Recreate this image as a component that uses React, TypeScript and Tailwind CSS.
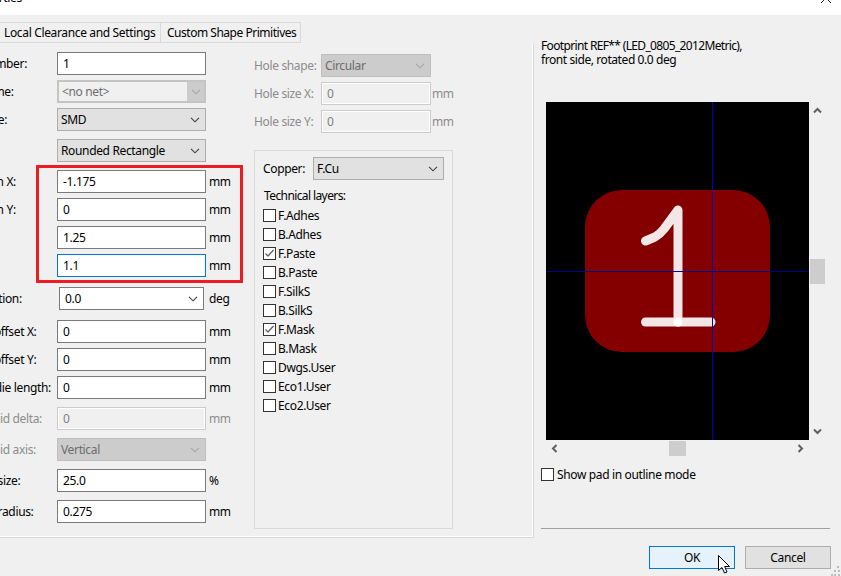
import React from "react";

const Chevron = ({ color = "#404040" }: { color?: string }) => (
  <svg width="10" height="6" viewBox="0 0 10 6" className="shrink-0">
    <polyline points="1,0.8 5,4.8 9,0.8" fill="none" stroke={color} strokeWidth="1.1" />
  </svg>
);

const Field = ({ value, active }: { value: string; active?: boolean }) => (
  <div
    className={`flex h-[23px] w-[149px] shrink-0 items-center border bg-white pl-[5px] ${
      active ? "border-[#0078d7]" : "border-[#7a7a7a]"
    }`}
  >
    {value}
  </div>
);

const DisabledField = ({ value, w }: { value: string; w: string }) => (
  <div className={`flex h-[23px] shrink-0 items-center border border-[#cccccc] bg-[#f0f0f0] pl-[5px] text-[#808080] shadow-[inset_0_0_0_1px_#ffffff] ${w}`}>
    {value}
  </div>
);

const Select = ({ value, w = "w-[149px]" }: { value: string; w?: string }) => (
  <div className={`flex h-[23px] shrink-0 items-center justify-between border border-[#adadad] bg-[#e1e1e1] pl-[3px] pr-[5px] ${w}`}>
    <span>{value}</span>
    <Chevron />
  </div>
);

const DisabledSelect = ({ value, w = "w-[149px]" }: { value: string; w?: string }) => (
  <div className={`flex h-[23px] shrink-0 items-center justify-between border border-[#bfbfbf] bg-[#cccccc] pl-[3px] pr-[5px] text-[#6d6d6d] ${w}`}>
    <span>{value}</span>
    <Chevron color="#a6a6a6" />
  </div>
);

const Row = ({
  label,
  unit,
  disabled,
  top,
  labelClass = "",
  children,
}: {
  label: string;
  unit?: string;
  disabled?: boolean;
  top: string;
  labelClass?: string;
  children: React.ReactNode;
}) => (
  <div className={`flex h-[23px] items-center ${top}`}>
    <span className={`w-[99px] shrink-0 whitespace-nowrap ${labelClass} ${disabled ? "text-[#8c8c8c]" : ""}`}>{label}</span>
    {children}
    {unit && <span className={`ml-[3px] ${disabled ? "text-[#8c8c8c]" : ""}`}>{unit}</span>}
  </div>
);

const Check = ({
  label,
  checked,
  top = "mt-[6px]",
  gap = "ml-[2px]",
}: {
  label: string;
  checked?: boolean;
  top?: string;
  gap?: string;
}) => (
  <div className={`flex h-[13px] items-center ${top}`}>
    <div className="flex h-[13px] w-[13px] shrink-0 items-center justify-center border border-[#333333] bg-white">
      {checked && (
        <svg width="11" height="11" viewBox="0 0 11 11">
          <polyline points="1.5,5.5 4,8 9.5,2" fill="none" stroke="#606060" strokeWidth="1.3" />
        </svg>
      )}
    </div>
    <span className={`whitespace-nowrap ${gap}`}>{label}</span>
  </div>
);

const Arrow = ({ d }: { d: string }) => (
  <svg width="9" height="9" viewBox="0 0 9 9" className="shrink-0">
    <polyline points={d} fill="none" stroke="#606060" strokeWidth="2" />
  </svg>
);

export default function App() {
  return (
    <div className="relative flex h-[576px] w-[841px] flex-col overflow-hidden bg-[#f0f0f0] font-['Noto_Sans',sans-serif] text-[12px] leading-[14px] tracking-[-0.35px] text-black">
      {/* title bar */}
      <div className="flex h-[15px] shrink-0 items-start justify-between overflow-hidden bg-white">
        <span className="-ml-[56px] -mt-[9px] whitespace-nowrap text-[12px] leading-[14px]">Pad Properties</span>
        <svg width="12" height="12" viewBox="0 0 12 12" className="mr-[9px] -mt-[7px]">
          <path d="M1 0 L11 10 M11 0 L1 10" stroke="#222222" strokeWidth="1" fill="none" />
        </svg>
      </div>

      <div className="flex flex-1">
        {/* notebook */}
        <div className="-ml-[42px] flex w-[576px] shrink-0 flex-col pt-[7px]">
          <div className="ml-[42px] flex h-[21px] items-center whitespace-nowrap">
            <div className="flex h-[21px] w-[161px] items-center border-y border-r border-[#d9d9d9] pl-[4px]">Local Clearance and Settings</div>
            <div className="flex h-[21px] w-[140px] items-center border-y border-r border-[#d9d9d9] pl-[6px] tracking-[-0.48px]">Custom Shape Primitives</div>
          </div>
          <div className="flex h-[495px] border-b border-r border-[#d9d9d9] shadow-[inset_-1px_-1px_0_#ffffff]">
            {/* left column */}
            <div className="flex w-[296px] shrink-0 flex-col pt-[9px]">
              <Row label="Pad number:" top=""><Field value="1" /></Row>
              <Row label="Net name:" top="mt-[5px]">
                <div className="flex h-[23px] w-[149px] shrink-0 items-center justify-between border-2 border-[#c4c4c4] bg-[#f0f0f0] pl-[3px] text-[#6d6d6d]">
                  <span>&lt;no net&gt;</span>
                  <div className="flex h-full w-[17px] items-center justify-center bg-[#cccccc]"><Chevron color="#a6a6a6" /></div>
                </div>
              </Row>
              <Row label="Pad type:" top="mt-[5px]"><Select value="SMD" /></Row>
              <Row label="Shape:" top="mt-[8px]"><Select value="Rounded Rectangle" /></Row>
              <div className="relative">
                <Row label="Position X:" unit="mm" top="mt-[8px]" labelClass="pl-[3px]"><Field value="-1.175" /></Row>
                <Row label="Position Y:" unit="mm" top="mt-[5px]" labelClass="pl-[3px]"><Field value="0" /></Row>
                <Row label="Size X:" unit="mm" top="mt-[5px]"><Field value="1.25" /></Row>
                <Row label="Size Y:" unit="mm" top="mt-[5px]"><Field value="1.1" active /></Row>
                <div className="absolute left-[78px] top-[3px] h-[118px] w-[207px] border-[3px] border-[#ed1c24]" />
              </div>
              <Row label="Orientation:" unit="deg" top="mt-[10px]">
                <div className="ml-[2px] flex h-[23px] w-[145px] shrink-0 items-center justify-between border border-[#7a7a7a] bg-white pl-[5px] pr-[5px]">
                  <span>0.0</span>
                  <Chevron />
                </div>
                <span className="w-[2px]" />
              </Row>
              <Row label="Shape offset X:" unit="mm" top="mt-[10px]"><Field value="0" /></Row>
              <Row label="Shape offset Y:" unit="mm" top="mt-[5px]"><Field value="0" /></Row>
              <Row label="Pad to die length:" unit="mm" top="mt-[5px]"><Field value="0" /></Row>
              <Row label="Trapezoid delta:" unit="mm" disabled top="mt-[8px]"><DisabledField value="0" w="w-[149px]" /></Row>
              <Row label="Trapezoid axis:" disabled top="mt-[8px]"><DisabledSelect value="Vertical" /></Row>
              <Row label="Corner size:" unit="%" top="mt-[8px]"><Field value="25.0" /></Row>
              <Row label="Corner radius:" unit="mm" top="mt-[8px]"><Field value="0.275" /></Row>
            </div>

            {/* middle column */}
            <div className="flex w-[199px] shrink-0 flex-col pt-[11px]">
              <div className="flex h-[23px] items-center text-[#8c8c8c]">
                <span className="w-[67px] shrink-0">Hole shape:</span>
                <DisabledSelect value="Circular" w="w-[110px]" />
              </div>
              <div className="mt-[5px] flex h-[23px] items-center text-[#8c8c8c]">
                <span className="w-[67px] shrink-0">Hole size X:</span>
                <DisabledField value="0" w="w-[110px]" />
                <span className="ml-[1px]">mm</span>
              </div>
              <div className="mt-[5px] flex h-[23px] items-center text-[#8c8c8c]">
                <span className="w-[67px] shrink-0">Hole size Y:</span>
                <DisabledField value="0" w="w-[110px]" />
                <span className="ml-[1px]">mm</span>
              </div>
              <div className="mt-[17px] flex h-[379px] flex-col border border-[#d9d9d9] pl-[8px] pt-[6px]">
                <div className="flex h-[23px] items-center">
                  <span className="w-[50px] shrink-0">Copper:</span>
                  <Select value="F.Cu" w="w-[131px]" />
                </div>
                <div className="ml-[1px] mt-[9px] flex h-[14px] items-center tracking-[-0.6px]">Technical layers:</div>
                <Check label="F.Adhes" top="mt-[6px]" />
                <Check label="B.Adhes" />
                <Check label="F.Paste" checked />
                <Check label="B.Paste" />
                <Check label="F.SilkS" />
                <Check label="B.SilkS" />
                <Check label="F.Mask" checked />
                <Check label="B.Mask" />
                <Check label="Dwgs.User" />
                <Check label="Eco1.User" />
                <Check label="Eco2.User" />
              </div>
            </div>
          </div>
        </div>

        {/* right column */}
        <div className="ml-[7px] flex w-[290px] shrink-0 flex-col pt-[24px]">
          <div className="h-[63px] whitespace-nowrap">
            <span className="tracking-[-0.65px]">Footprint REF** (LED_0805_2012Metric),</span>
            <br />
            <span className="tracking-[-0.42px]">front side, rotated 0.0 deg</span>
          </div>
          <div className="ml-[5px] flex">
            <svg width="263" height="338" viewBox="546 102 263 338" className="shrink-0" shapeRendering="crispEdges">
              <rect x="546" y="102" width="263" height="338" fill="#000000" />
              <rect x="585" y="190" width="185" height="162" rx="37" ry="37" fill="#840000" shapeRendering="auto" />
              <g fill="none" stroke="#f2e6e6" strokeWidth="9" strokeLinecap="round" strokeLinejoin="round" shapeRendering="auto">
                <path d="M645.5 241 L655 237 Q660 234 664 229 L678 210 V322" />
                <path d="M645.5 322 H711" />
              </g>
              <circle cx="678" cy="322" r="4.5" fill="#ffffff" shapeRendering="auto" />
              <rect x="546" y="271" width="263" height="1" fill="#00008c" />
              <rect x="712" y="102" width="1" height="338" fill="#0000c8" />
            </svg>
            <div className="ml-[1px] flex h-[338px] w-[15px] flex-col items-center justify-between py-[4px]">
              <Arrow d="1,6.5 4.5,3 8,6.5" />
              <div className="h-[25px] w-[15px] bg-[#cdcdcd]" />
              <Arrow d="1,2.5 4.5,6 8,2.5" />
            </div>
          </div>
          <div className="ml-[5px] mt-[1px] flex h-[15px] w-[263px] items-center justify-between px-[4px]">
            <Arrow d="6.5,1 3,4.5 6.5,8" />
            <div className="h-[15px] w-[17px] bg-[#cdcdcd]" />
            <Arrow d="2.5,1 6,4.5 2.5,8" />
          </div>
          <Check label="Show pad in outline mode" top="mt-[12px]" gap="ml-[3px]" />
          <div className="mt-[47px] h-px w-[289px] bg-[#a0a0a0]" />
          <div className="mt-[17px] flex w-[290px] justify-end gap-[10px]">
            <div className="flex h-[23px] w-[86px] items-center justify-center border-[1.5px] border-[#0078d7] bg-[#e5f1fb]">OK</div>
            <div className="flex h-[23px] w-[86px] items-center justify-center border border-[#adadad] bg-[#e1e1e1]">Cancel</div>
          </div>
        </div>
      </div>

      {/* mouse cursor */}
      <svg width="13" height="19" viewBox="0 0 13 19" className="absolute left-[718px] top-[555px]">
        <path d="M0.5 0.5 V15.5 L4 12.5 L6.5 18 L9 17 L6.7 11.5 H11.5 Z" fill="#ffffff" stroke="#000000" strokeWidth="1" />
      </svg>
      {/* resize grip */}
      <svg width="10" height="10" viewBox="0 0 10 10" className="absolute left-[831px] top-[566px]">
        <g fill="#bcbcbc">
          <rect x="6" y="0" width="2" height="2" />
          <rect x="3" y="4" width="2" height="2" />
          <rect x="7" y="4" width="2" height="2" />
          <rect x="0" y="8" width="2" height="2" />
          <rect x="3" y="8" width="2" height="2" />
          <rect x="7" y="8" width="2" height="2" />
        </g>
      </svg>
    </div>
  );
}
